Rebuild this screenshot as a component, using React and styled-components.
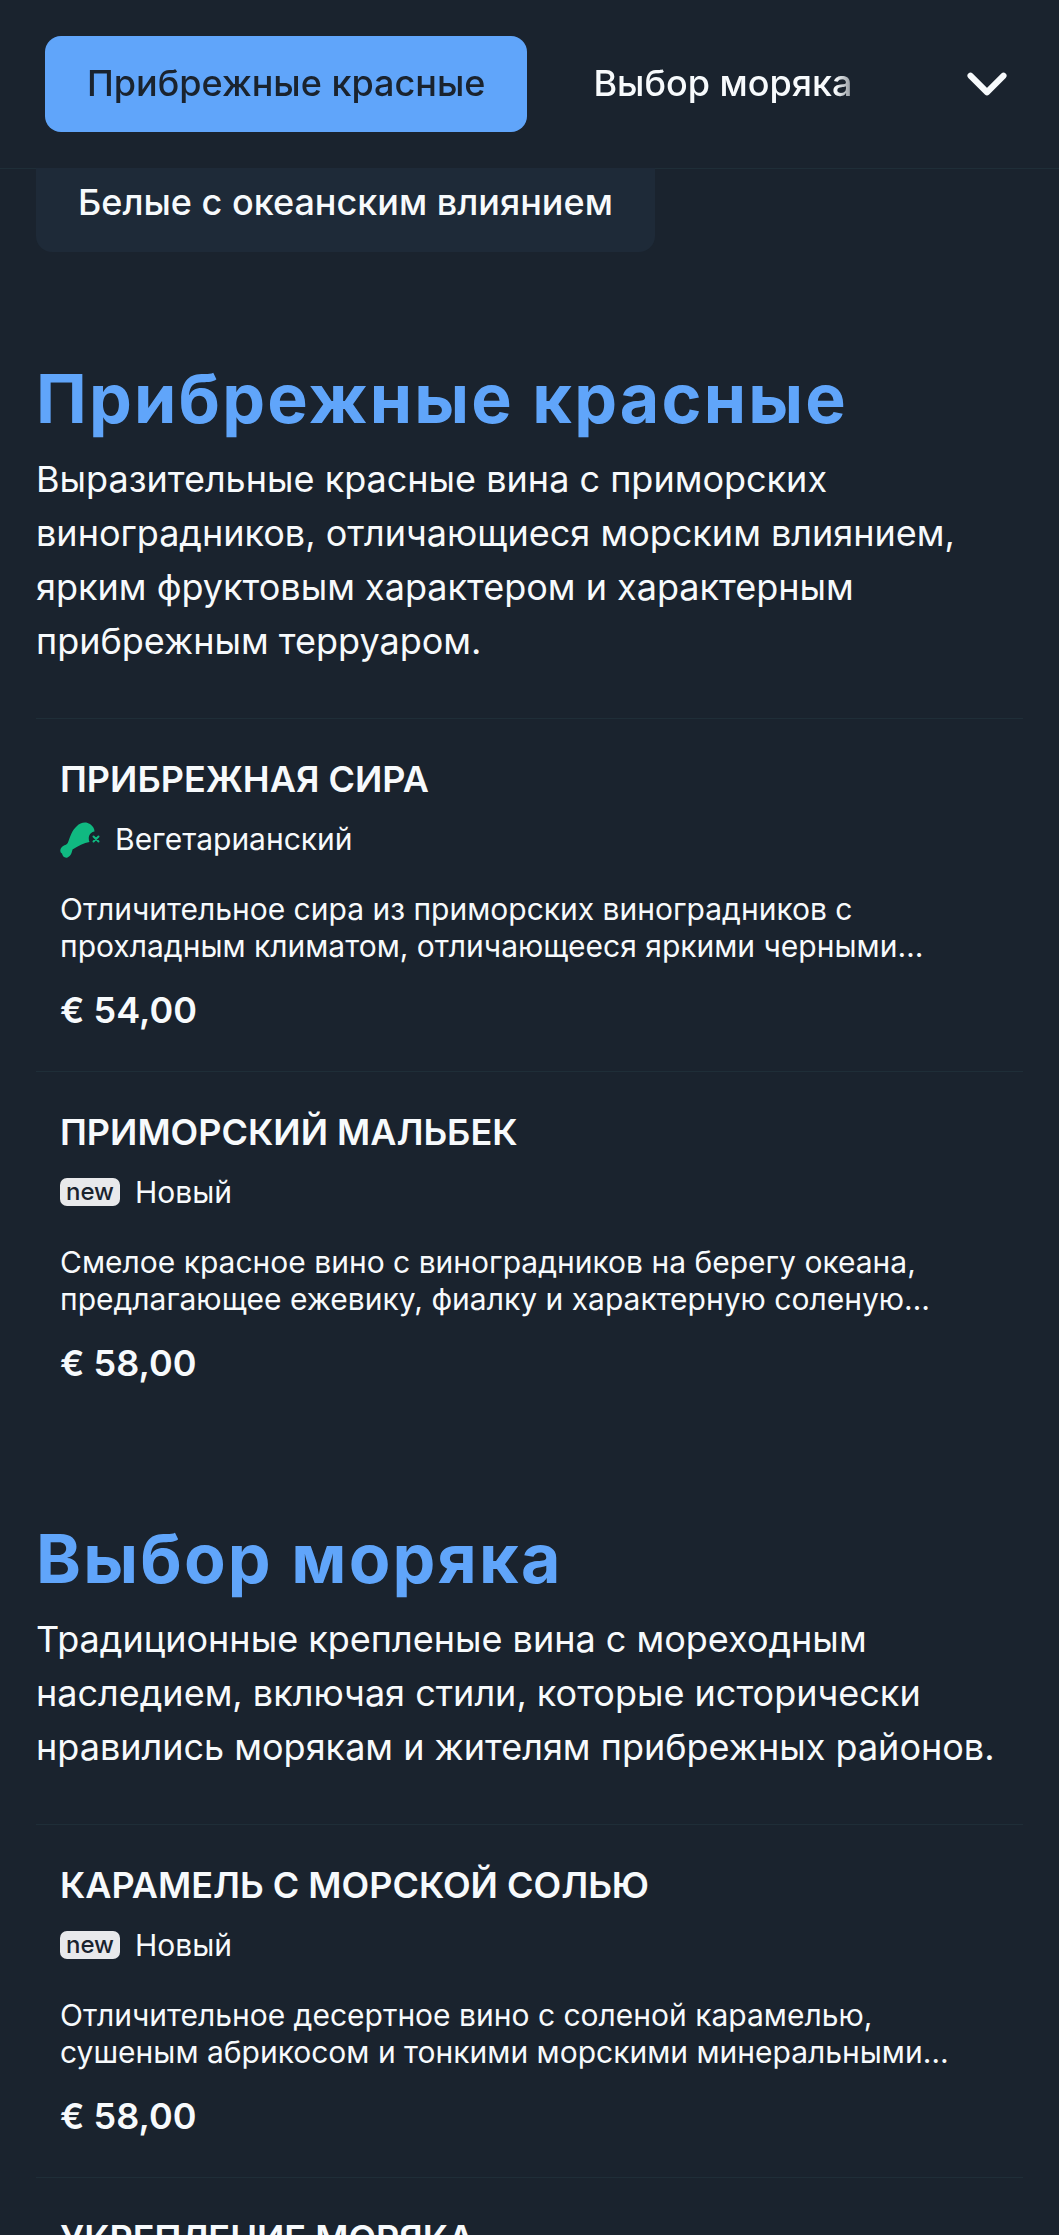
import React from 'react'
import styled, { createGlobalStyle } from 'styled-components'
import { ChevronDown } from 'lucide-react'

const bg = '#1a232e'
const blue = '#60a5fa'
const white = '#f7fafc'
const line = '#1f2e38'

const GlobalStyle = createGlobalStyle`
  html, body {
    margin: 0;
    padding: 0;
    background: ${bg};
  }
  body {
    font-family: 'Inter', 'Liberation Sans', sans-serif;
    color: ${white};
  }
`

const Page = styled.div`
  width: 1059px;
  height: 2235px;
  overflow: hidden;
  background: ${bg};
`

const Header = styled.div`
  height: 168px;
  display: flex;
  align-items: center;
  padding: 0 37px 0 45px;
  border-bottom: 1px solid ${line};
`

const Tabs = styled.div`
  flex: 1;
  display: flex;
  align-items: center;
  gap: 24px;
  overflow: hidden;
  white-space: nowrap;
  mask-image: linear-gradient(to right, #000 97%, rgba(0, 0, 0, 0.3) 100%);
`

const Tab = styled.div`
  flex-shrink: 0;
  height: 96px;
  display: flex;
  align-items: center;
  padding: 0 42px 2px;
  box-sizing: border-box;
  border-radius: 16px;
  font-size: 36px;
  font-weight: 500;
  background: ${props => props.$active ? blue : 'transparent'};
  color: ${props => props.$active ? bg : white};
`

const ChevronWrap = styled.div`
  width: 162px;
  flex-shrink: 0;
  display: flex;
  justify-content: flex-end;
  padding-right: 2px;
  box-sizing: border-box;
  color: ${white};
`

const Content = styled.div`
  padding: 0 36px;
`

const SubTab = styled.div`
  display: inline-flex;
  align-items: center;
  height: 84px;
  padding: 0 42px 16px;
  margin-top: -1px;
  border-radius: 0 0 16px 16px;
  background: #1e2a38;
  font-size: 36px;
  font-weight: 500;
  box-sizing: border-box;
`

const Section = styled.section`
  margin-top: ${props => props.$first ? '101px' : '89px'};
`

const SectionTitle = styled.h2`
  margin: 0;
  font-family: 'Inter', sans-serif;
  font-size: 68px;
  line-height: 90px;
  font-weight: 700;
  letter-spacing: 2.200px;
  color: ${blue};
`

const SectionText = styled.p`
  margin: 9px 0 0;
  font-size: 36px;
  line-height: 54px;
  font-weight: 400;
`

const ItemList = styled.div`
  margin-top: 50px;
`

const Item = styled.div`
  border-top: 1px solid ${line};
  padding: 24px 24px 28px;
  height: 353px;
  box-sizing: border-box;
`

const ItemTitle = styled.div`
  font-size: 36px;
  line-height: 72px;
  font-weight: 600;
`

const TagRow = styled.div`
  display: flex;
  align-items: center;
  gap: ${props => props.$veg ? '14px' : '15px'};
  height: 48px;
  font-size: 30px;
  font-weight: 400;
`

const NewBadge = styled.span`
  display: inline-flex;
  align-items: center;
  justify-content: center;
  width: 60px;
  height: 28px;
  border-radius: 7px;
  background: #e8e9eb;
  color: #1a232e;
  font-size: 24px;
  font-weight: 500;
  line-height: 1;
`

const Description = styled.div`
  margin-top: 28px;
  font-size: 30px;
  line-height: 37px;
  display: -webkit-box;
  -webkit-box-orient: vertical;
  -webkit-line-clamp: 2;
  overflow: hidden;
`

const Price = styled.div`
  margin-top: 20px;
  font-size: 36px;
  line-height: 50px;
  font-weight: 600;
`

const VegIcon = () => (
  <svg width="41" height="37" viewBox="0 0 41 37">
    <path
      d="M17 5C20 1.500 26 0 30 3C33 5 34.500 8 34.500 10.500C31 11 28.500 14 28.800 18C28.800 19 29 20 29.500 21C24 22 18 25 12.500 28.500C12 31 11 35 7.500 36.500C4.500 37.500 2.500 35 2 32.500C0 32 -.5 28 2 26C4 24 7 24 8 21.500C10 16 12 9 17 5Z"
      fill="#10b981"
    />
    <path d="M33.500 15.500l5 5M38.500 15.500l-5 5" stroke="#10b981" strokeWidth="2" strokeLinecap="round" />
  </svg>
)

const sections = [
  {
    title: 'Прибрежные красные',
    text: 'Выразительные красные вина с приморских виноградников, отличающиеся морским влиянием, ярким фруктовым характером и характерным прибрежным терруаром.',
    items: [
      {
        name: 'ПРИБРЕЖНАЯ СИРА',
        tag: 'veg',
        desc: 'Отличительное сира из приморских виноградников с прохладным климатом, отличающееся яркими черными фруктами и перцем с нотами морского бриза.',
        price: '€ 54,00',
      },
      {
        name: 'ПРИМОРСКИЙ МАЛЬБЕК',
        tag: 'new',
        desc: 'Смелое красное вино с виноградников на берегу океана, предлагающее ежевику, фиалку и характерную соленую минеральность в долгом послевкусии.',
        price: '€ 58,00',
      },
    ],
  },
  {
    title: 'Выбор моряка',
    text: 'Традиционные крепленые вина с мореходным наследием, включая стили, которые исторически нравились морякам и жителям прибрежных районов.',
    items: [
      {
        name: 'КАРАМЕЛЬ С МОРСКОЙ СОЛЬЮ',
        tag: 'new',
        desc: 'Отличительное десертное вино с соленой карамелью, сушеным абрикосом и тонкими морскими минеральными нотами в долгом послевкусии.',
        price: '€ 58,00',
      },
      {
        name: 'УКРЕПЛЕНИЕ МОРЯКА',
        tag: 'new',
        desc: 'Традиционное крепленое вино.',
        price: '€ 58,00',
      },
    ],
  },
]

const App = () => {
  return (
    <Page>
      <GlobalStyle />
      <Header>
        <Tabs>
          <Tab $active>Прибрежные красные</Tab>
          <Tab>Выбор моряка</Tab>
        </Tabs>
        <ChevronWrap>
          <ChevronDown size={66} strokeWidth={2.2} />
        </ChevronWrap>
      </Header>
      <Content>
        <SubTab>Белые с океанским влиянием</SubTab>
        {sections.map((section, i) => (
          <Section key={section.title} $first={i === 0}>
            <SectionTitle>{section.title}</SectionTitle>
            <SectionText>{section.text}</SectionText>
            <ItemList>
              {section.items.map(item => (
                <Item key={item.name}>
                  <ItemTitle>{item.name}</ItemTitle>
                  <TagRow $veg={item.tag === 'veg'}>
                    {item.tag === 'veg' ? <VegIcon /> : <NewBadge>new</NewBadge>}
                    {item.tag === 'veg' ? 'Вегетарианский' : 'Новый'}
                  </TagRow>
                  <Description>{item.desc}</Description>
                  <Price>{item.price}</Price>
                </Item>
              ))}
            </ItemList>
          </Section>
        ))}
      </Content>
    </Page>
  )
}

export default App
